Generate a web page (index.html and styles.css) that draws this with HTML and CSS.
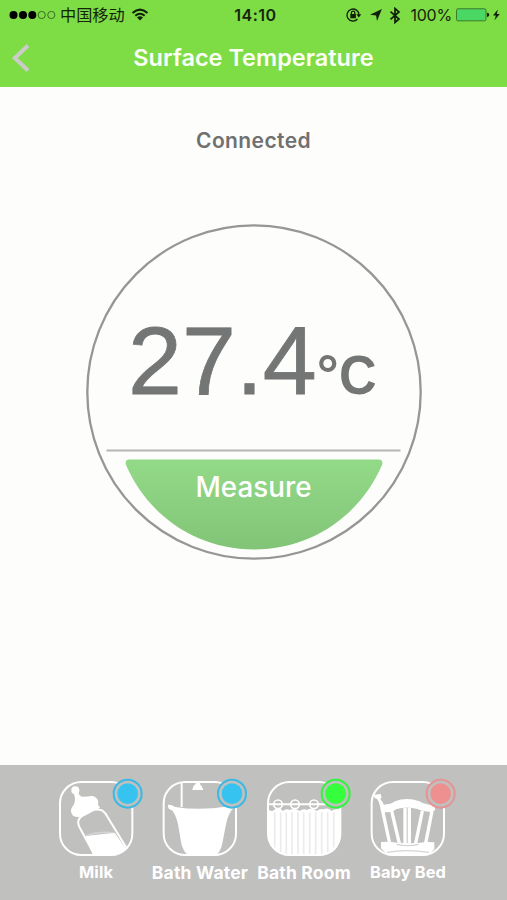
FILE: index.html
```html
<!DOCTYPE html>
<html lang="en">
<head>
<meta charset="utf-8">
<title>Surface Temperature</title>
<link rel="stylesheet" href="styles.css">
</head>
<body>
<div class="app">
  <header class="header">
    <div class="status">
      <div class="status-left">
        <svg class="signal" width="48" height="10" viewBox="0 0 48 10">
          <circle cx="4.5" cy="5" r="4"/><circle cx="14" cy="5" r="4"/><circle cx="23.3" cy="5" r="4"/>
          <circle class="ring" cx="32.7" cy="5" r="3.6"/><circle class="ring" cx="42.3" cy="5" r="3.6"/>
        </svg>
        <span class="carrier">中国移动</span>
        <svg class="wifi" width="18" height="13" viewBox="0 0 18 13">
          <path class="arc" d="M1.500 5Q9-1.800 16.500 5M4.300 7.800Q9 3.700 13.700 7.800"/>
          <path d="M9 12.400L6 9.500Q9 7.200 12 9.500Z"/>
        </svg>
      </div>
      <span class="time">14:10</span>
      <div class="status-right">
        <svg width="17" height="16" viewBox="0 0 17 16">
          <path class="thin" d="M12.500 12A6 6 0 1 1 14 7.800"/>
          <path d="M11.300 7.300H16.300L13.800 10.500ZM5.300 7H10.900V11.200H5.300Z"/>
          <path class="thin" d="M6.400 7V5.800A1.700 1.700 0 0 1 9.800 5.800V7"/>
        </svg>
        <svg class="location" width="12" height="12" viewBox="0 0 12 12"><path d="M11.900 0L7 12L6.100 6.400L0 5.700Z"/></svg>
        <svg class="bluetooth" width="12" height="17" viewBox="0 0 12 17"><path class="blue" d="M1.500 4.600L10 12L6 15.500V1.500L10 5L1.500 12.400"/></svg>
        <span class="percent">100%</span>
        <svg class="battery" width="44" height="14" viewBox="0 0 44 14">
          <rect class="cell" x=".5" y=".8" width="29.500" height="12" rx="1.500"/>
          <path d="M31 4.700Q33.300 4.700 33.300 6.800T31 8.900ZM41.800 1.500L37 7.600H39.900L38.500 12.200L43.800 5.900H40.800Z"/>
        </svg>
      </div>
    </div>
    <div class="nav">
      <svg class="back" width="20" height="30" viewBox="0 0 20 30"><path d="M18 2.500L4.800 15L18 27.500"/></svg>
      <h1 class="title">Surface Temperature</h1>
    </div>
  </header>
  <main class="main">
    <p class="state">Connected</p>
    <section class="dial">
      <svg class="dial-art" width="340" height="340" viewBox="0 0 340 340">
        <defs><linearGradient id="leaf" x1="0" y1="0" x2="0" y2="1"><stop offset="0" stop-color="#93da88"/><stop offset="1" stop-color="#82c477"/></linearGradient></defs>
        <circle class="rim" cx="170" cy="170" r="166.700"/>
        <path class="rule" d="M22.500 228.500H316.500"/>
        <path fill="url(#leaf)" d="M45 237.500H295Q299.500 238 298 243C277 292 229 327.500 170 327.500S63 292 42 243Q40.500 238 45 237.500Z"/>
      </svg>
      <div class="reading"><span class="value">27.4</span><span class="degree">°</span><span class="unit">C</span></div>
      <div class="measure">Measure</div>
    </section>
  </main>
  <footer class="tabs">
    <div class="tab">
      <svg class="icon" width="104" height="95" viewBox="0 0 312 285">
        <rect class="frame" x="48" y="51" width="217" height="219" rx="64"/>
        <circle class="solid" cx="94" cy="76" r="12"/><circle class="solid" cx="143" cy="113" r="20"/><circle class="solid" cx="99" cy="138" r="18"/>
        <path class="solid" d="M88 80L103 78Q102 90 114 95L146 94L168 128L108 160L82 130Q95 113 93 99ZM124 213L212 203L247 253Q230 270 202 270H147Z"/>
        <path class="line" d="M150 267L105 184Q97 164 115 151Q150 126 174 136Q185 143 192 158L249 251"/>
        <path class="fold" d="M124 212Q165 198 208 203"/>
        <circle class="halo" cx="251" cy="86" r="43"/><circle class="badge blue-ring" cx="251" cy="86" r="42"/><circle class="blue-dot" cx="251" cy="86" r="31"/>
      </svg>
      <span class="label small">Milk</span>
    </div>
    <div class="tab">
      <svg class="icon" width="104" height="95" viewBox="0 0 312 285">
        <rect class="frame" x="47" y="51" width="217" height="219" rx="64"/>
        <path class="line" d="M101 54V126"/>
        <path class="solid" d="M143 52H156V58Q163 62 166 75H133Q135 62 143 58ZM60 119Q70 118 82 126Q155 138 242 124L256 130Q241 145 234 178L223 235Q219 257 205 271H121Q106 260 100 236L90 177Q83 149 72 136Q57 132 60 119Z"/>
        <circle class="halo" cx="252" cy="86" r="43"/><circle class="badge blue-ring" cx="252" cy="86" r="42"/><circle class="blue-dot" cx="252" cy="86" r="31"/>
      </svg>
      <span class="label">Bath Water</span>
    </div>
    <div class="tab">
      <svg class="icon" width="104" height="95" viewBox="0 0 312 285">
        <path class="curtain" d="M48 133Q59 142 67 134Q82 126 93 138Q102 129 113 135Q129 127 143 138Q154 129 165 135Q180 126 194 138Q204 129 214 133Q229 126 239 138Q252 128 266 135V206Q264 269 204 271H112Q50 267 48 206Z"/>
        <path class="pleats" d="M68 142V248M86 142V262M103 142V269M120 142V269M138 142V269M155 142V269M173 142V269M191 142V269M209 142V269M227 142V262M245 142V248"/>
        <rect class="frame" x="48" y="51" width="217" height="219" rx="64"/>
        <path class="line" d="M50 118H264"/>
        <circle class="hook" cx="78" cy="118" r="13"/><circle class="hook" cx="129" cy="118" r="13"/><circle class="hook" cx="186" cy="118" r="13"/>
        <circle class="halo" cx="251" cy="86" r="43"/><circle class="badge green-ring" cx="251" cy="86" r="42"/><circle class="green-dot" cx="251" cy="86" r="31"/>
      </svg>
      <span class="label">Bath Room</span>
    </div>
    <div class="tab">
      <svg class="icon" width="104" height="95" viewBox="0 0 312 285">
        <rect class="frame" x="47" y="51" width="217" height="219" rx="64"/>
        <path class="solid" d="M54 89L74 87L77 98L73 102L84 119Q104 119 117 109Q153 95 190 109Q208 120 236 121L237 136L225 141Q196 138 184 132Q153 123 122 132Q107 143 84 142L64 103L55 98ZM75 231L100 230Q154 239 213 231L235 232V252Q222 270 202 271H111Q87 267 75 250Z"/>
        <path class="slats" d="M74 110L101 235M107 138L130 235M147 128V236M160 128V236M199 138L179 235M228 138L209 235"/>
        <path class="fold" d="M122 238Q154 246 188 238M94 262Q149 252 219 262"/>
        <circle class="halo" cx="254" cy="86" r="43"/><circle class="badge red-ring" cx="254" cy="86" r="42"/><circle class="red-dot" cx="254" cy="86" r="31"/>
      </svg>
      <span class="label small">Baby Bed</span>
    </div>
  </footer>
</div>
</body>
</html>
```
FILE: styles.css
```css
* { box-sizing: border-box; }
body { margin: 0; font-family: Inter, "Liberation Sans", "Noto Sans CJK SC", sans-serif; background: #fdfdfb; }
svg { display: block; flex: none; }
.app { width: 507px; height: 900px; display: flex; flex-direction: column; }
.header { height: 87px; background: #7edc45; }
.status { height: 30px; display: grid; grid-template-columns: 1fr auto 1fr; align-items: center; padding: 0 7px 0 9px; color: #14250b; fill: #10200a; }
.status-left, .status-right { display: flex; align-items: center; }
.status-right { justify-content: flex-end; }
.signal { fill: #000; }
.ring { fill: none; stroke: #3c6d21; stroke-width: 1; }
.carrier { margin: -2px 0 0 3px; font: 16.2px/20px "Noto Sans CJK SC", sans-serif; }
.wifi { margin-left: 6px; margin-top: -2px; }
.arc { fill: none; stroke: #10200a; stroke-width: 2.1; }
.time { padding-left: 2px; font-size: 16px; font-weight: 600; line-height: 20px; letter-spacing: .5px; }
.thin { fill: none; stroke: #10200a; stroke-width: 1.3; }
.location { margin-left: 8px; }
.bluetooth { margin-left: 7px; }
.blue { fill: none; stroke: #10200a; stroke-width: 1.7; }
.percent { margin-left: 9px; font-size: 16px; line-height: 20px; letter-spacing: -.2px; }
.battery { margin-left: 4px; }
.cell { fill: #4bd763; stroke: #397b29; stroke-width: 1; }
.nav { height: 55px; display: grid; grid-template-columns: 40px 1fr 40px; align-items: center; }
.back { margin-left: 10px; fill: none; stroke: #cbcbc8; stroke-width: 4; }
.title { margin: 0; text-align: center; font-size: 23.5px; font-weight: 600; line-height: 30px; color: #fbfff5; white-space: nowrap; }
.main { height: 678px; display: flex; flex-direction: column; align-items: center; }
.state { margin: 41px 0 0; font-size: 21px; font-weight: 600; line-height: 26px; letter-spacing: .4px; color: #707070; }
.dial { width: 340px; height: 340px; margin-top: 68px; display: grid; }
.dial > * { grid-area: 1 / 1; }
.rim { fill: none; stroke: #969696; stroke-width: 2.3; }
.rule { stroke: #b5b5b3; stroke-width: 2; }
.reading { height: 110px; margin: 83.5px 0 0 44.5px; display: flex; align-items: baseline; line-height: 110px; color: #747676; font-family: "Liberation Sans", sans-serif; white-space: nowrap; }
.value { font-size: 97px; -webkit-text-stroke: .8px #747676; }
.degree { font-size: 55px; font-weight: 700; }
.unit { font-size: 56px; font-weight: 700; transform: scaleX(.93); transform-origin: left; }
.measure { margin-top: 248px; height: 34px; text-align: center; font-size: 27.8px; font-weight: 500; line-height: 34px; color: #fff; }
.tabs { height: 135px; padding: 0 47px 0 44px; display: flex; background: #c0c0bf; }
.tab { width: 104px; display: flex; flex-direction: column; align-items: center; }
.label { font-size: 17.5px; font-weight: 700; line-height: 25px; letter-spacing: .2px; color: #fff; white-space: nowrap; }
.small { font-size: 16.4px; line-height: 24px; letter-spacing: .1px; }
.frame { fill: none; stroke: #fff; stroke-width: 6; }
.solid, .curtain { fill: #fff; }
.line { fill: none; stroke: #fff; stroke-width: 6; }
.pleats { fill: none; stroke: #ebebeb; stroke-width: 5; }
.hook { fill: none; stroke: #fff; stroke-width: 5; }
.slats { fill: none; stroke: #fff; stroke-width: 10; }
.fold { fill: none; stroke: #d4d4d4; stroke-width: 4; }
.halo { fill: #c0c0bf; }
.badge { fill: none; stroke-width: 6; }
.blue-ring { stroke: #39b9e4; }
.blue-dot { fill: #37c3f0; }
.green-ring { stroke: #31f33e; }
.green-dot { fill: #35ff3d; }
.red-ring { stroke: #e39494; }
.red-dot { fill: #ef9090; }
```
